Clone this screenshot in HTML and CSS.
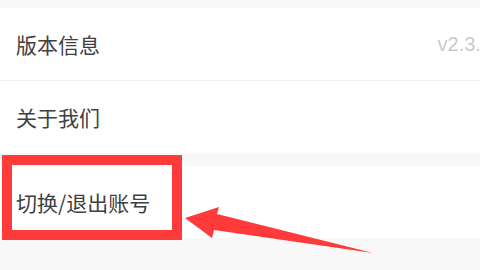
FILE: index.html
```html
<!DOCTYPE html>
<html lang="zh-CN">
<head>
  <meta charset="UTF-8">
  <meta name="viewport" content="width=device-width, initial-scale=1.0">
  <title>设置</title>
  <link rel="stylesheet" href="styles.css">
</head>
<body>
  <div class="group">
    <div class="row">
      <span class="label">版本信息</span>
      <span class="value">v2.3.0</span>
    </div>
    <div class="row">
      <span class="label">关于我们</span>
    </div>
  </div>

  <div class="group">
    <div class="row">
      <span class="label">切换/退出账号</span>
    </div>
  </div>

  <!-- annotation over the screenshot -->
  <div class="mark-box"></div>
  <svg class="mark-arrow" width="480" height="270" viewBox="0 0 480 270">
    <polygon points="185,218 219,207 217,214 373,253 214,230 212,238" fill="#fe3a3a"/>
  </svg>
</body>
</html>
```

FILE: styles.css
```css
body {
  margin: 0;
  background: #f8f8f8;
  font-family: "Noto Sans CJK SC", "Liberation Sans", sans-serif;
  color: #404040;
  overflow: hidden;
  height: 270px;
  position: relative;
}
.group {
  background: #fff;
  margin-top: 8px;
}
.group + .group {
  margin-top: 13px;
}
.row {
  height: 72px;
  display: flex;
  align-items: center;
  justify-content: space-between;
  padding: 0 15px 0 16px;
  font-size: 21px;
}
.row + .row {
  border-top: 1px solid #f2f2f2;
}
.value {
  font-family: "Liberation Sans", sans-serif;
  font-size: 20px;
  color: #cacaca;
  margin-right: -27px;
}
.mark-box {
  position: absolute;
  left: 2px;
  top: 155px;
  width: 160px;
  height: 65px;
  border: 10px solid #fe3a3a;
}
.mark-arrow {
  position: absolute;
  left: 0;
  top: 0;
}
```
